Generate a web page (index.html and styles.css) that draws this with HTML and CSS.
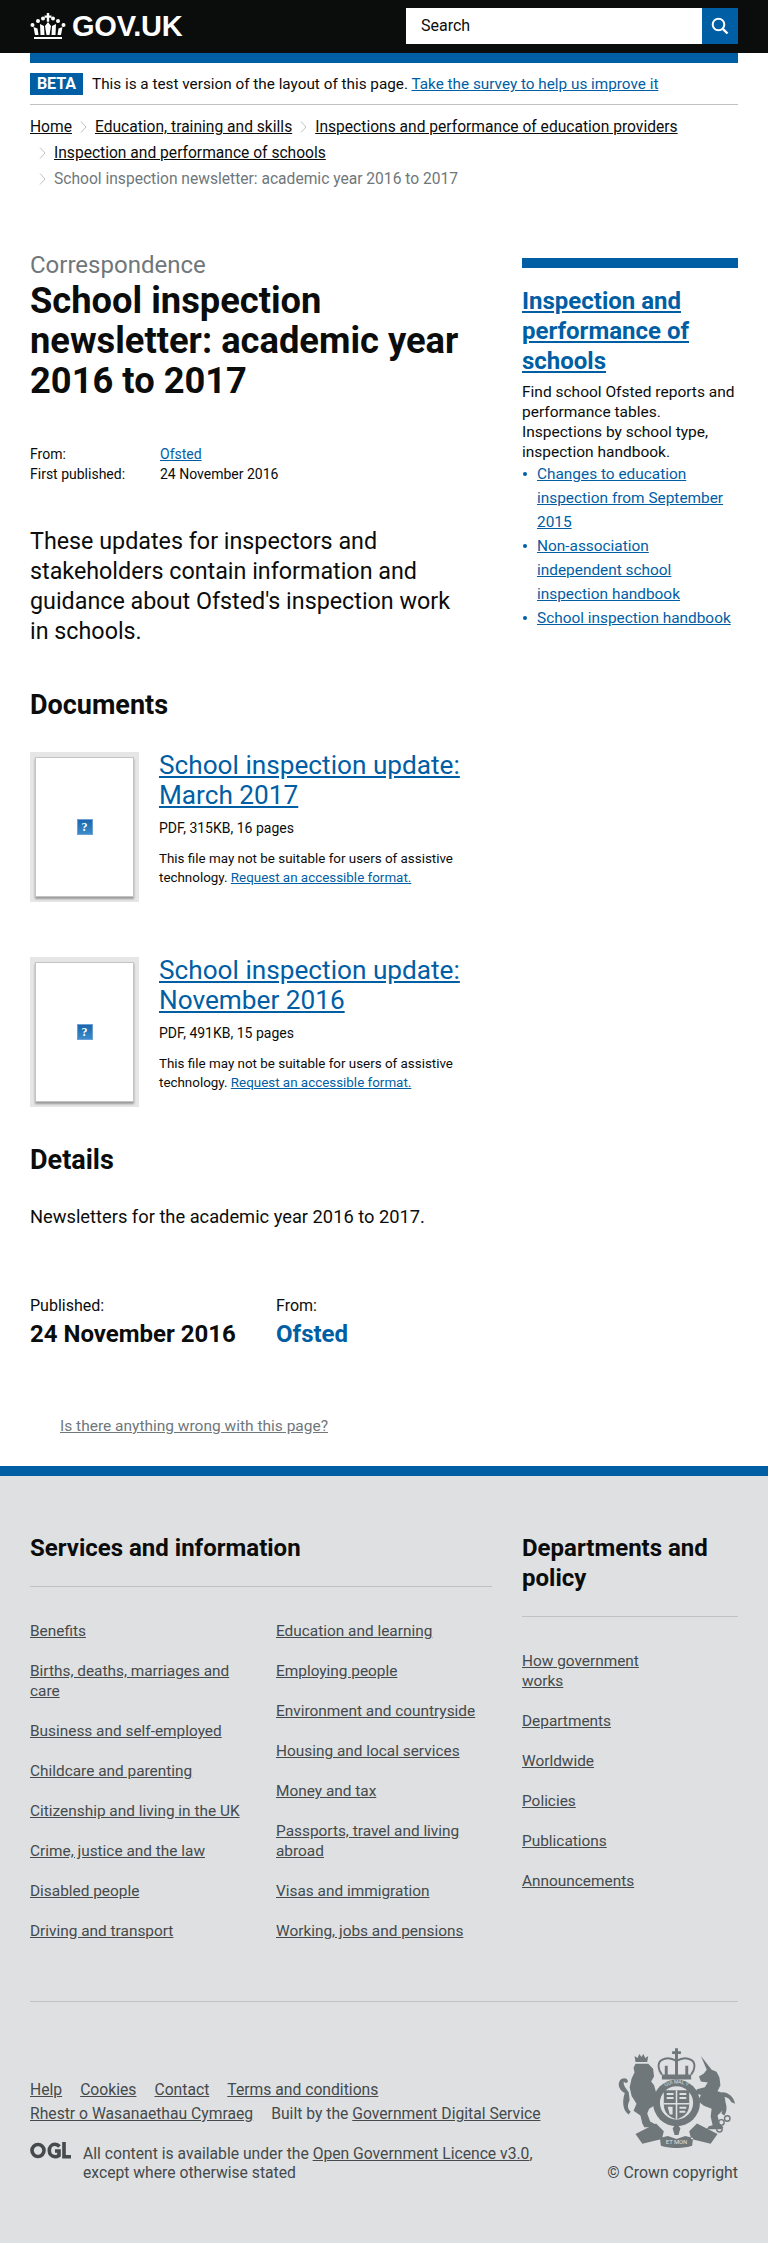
FILE: index.html
```html
<!DOCTYPE html>
<html lang="en">
<head>
<meta charset="utf-8">
<title>School inspection newsletter: academic year 2016 to 2017 - GOV.UK</title>
<link rel="stylesheet" href="styles.css">
</head>
<body>
<header class="site-header">
  <a class="logo" href="#">
    <svg class="crown" width="36" height="26" viewBox="0 0 36 26" aria-hidden="true"><g fill="#fff"><circle cx="2.500" cy="12" r="2"/><circle cx="8" cy="8" r="2"/><circle cx="13" cy="5.500" r="2"/><circle cx="23" cy="5.500" r="2"/><circle cx="28" cy="8" r="2"/><circle cx="33.500" cy="12" r="2"/><path d="M16.800 0h2.400v2.500h2.300v2.300h-2.300v4h-2.400v-4h-2.300v-2.300h2.300z"/><path d="M4 24h28v2H4zM3.500 14l4 1.500 1 6.500H5zM32.500 14l-4 1.500-1 6.500H31zM10 11l4 2 .5 9H10.500zM26 11l-4 2-.5 9h4zM18 9l3 4-1.500 9h-3L15 13z"/></g></svg>
    <span class="logo-text">GOV.UK</span>
  </a>
  <form class="search">
    <span class="search-input">Search</span>
    <button class="search-btn" type="button" aria-label="Search">
      <svg width="20" height="20" viewBox="0 0 20 20"><circle cx="8.500" cy="8.500" r="5.800" fill="none" stroke="#fff" stroke-width="2"/><path d="M12.800 12.800l4.700 4.700" stroke="#fff" stroke-width="2.400"/></svg>
    </button>
  </form>
</header>

<div class="wrap">
  <div class="blue-bar"></div>
  <div class="beta">
    <strong class="beta-tag">BETA</strong>
    <span>This is a test version of the layout of this page. <a class="lnk" href="#">Take the survey to help us improve it</a></span>
  </div>
  <nav class="crumbs">
    <div class="crumb-line"><a href="#">Home</a><svg class="chev" width="7" height="12" viewBox="0 0 7 12" aria-hidden="true"><path d="M1 .5L6 6 1 11.500"/></svg><a href="#">Education, training and skills</a><svg class="chev" width="7" height="12" viewBox="0 0 7 12" aria-hidden="true"><path d="M1 .5L6 6 1 11.500"/></svg><a href="#">Inspections and performance of education providers</a></div>
    <div class="crumb-line"><svg class="chev first" width="7" height="12" viewBox="0 0 7 12" aria-hidden="true"><path d="M1 .5L6 6 1 11.500"/></svg><a href="#">Inspection and performance of schools</a></div>
    <div class="crumb-line current"><svg class="chev first" width="7" height="12" viewBox="0 0 7 12" aria-hidden="true"><path d="M1 .5L6 6 1 11.500"/></svg><span>School inspection newsletter: academic year 2016 to 2017</span></div>
  </nav>

  <div class="columns">
    <main class="main-col">
      <p class="kicker">Correspondence</p>
      <h1 class="title">School inspection newsletter: academic year 2016 to 2017</h1>
      <dl class="meta">
        <dt>From:</dt><dd><a class="lnk" href="#">Ofsted</a></dd>
        <dt>First published:</dt><dd>24 November 2016</dd>
      </dl>
      <p class="lead">These updates for inspectors and stakeholders contain information and guidance about Ofsted's inspection work in schools.</p>

      <h2 class="section-h docs-h">Documents</h2>
      <article class="doc">
        <div class="thumb"><div class="page"><span class="qmark">?</span></div></div>
        <div class="doc-body">
          <h3 class="doc-title"><a class="lnk" href="#">School inspection update: March 2017</a></h3>
          <p class="doc-meta">PDF, 315KB, 16 pages</p>
          <p class="doc-note">This file may not be suitable for users of assistive technology. <a class="lnk" href="#">Request an accessible format.</a></p>
        </div>
      </article>
      <article class="doc">
        <div class="thumb"><div class="page"><span class="qmark">?</span></div></div>
        <div class="doc-body">
          <h3 class="doc-title"><a class="lnk" href="#">School inspection update: November 2016</a></h3>
          <p class="doc-meta">PDF, 491KB, 15 pages</p>
          <p class="doc-note">This file may not be suitable for users of assistive technology. <a class="lnk" href="#">Request an accessible format.</a></p>
        </div>
      </article>

      <h2 class="section-h details-h">Details</h2>
      <p class="details-text">Newsletters for the academic year 2016 to 2017.</p>
    </main>
    <aside class="side">
      <h2 class="side-title"><a href="#">Inspection and performance of schools</a></h2>
      <p class="side-text">Find school Ofsted reports and performance tables. Inspections by school type, inspection handbook.</p>
      <ul class="side-list">
        <li><a class="lnk" href="#">Changes to education inspection from September 2015</a></li>
        <li><a class="lnk" href="#">Non-association independent school inspection handbook</a></li>
        <li><a class="lnk" href="#">School inspection handbook</a></li>
      </ul>
    </aside>
  </div>

  <div class="pub">
    <div class="pub-item"><div class="pub-label">Published:</div><div class="pub-value">24 November 2016</div></div>
    <div class="pub-item"><div class="pub-label">From:</div><div class="pub-value"><a href="#">Ofsted</a></div></div>
  </div>
  <a class="wrong" href="#">Is there anything wrong with this page?</a>
</div>

<footer class="footer">
  <div class="foot-nav">
    <section class="foot-services">
      <h2 class="foot-h">Services and information</h2>
      <div class="foot-cols">
        <ul class="foot-list">
          <li><a href="#">Benefits</a></li>
          <li><a href="#">Births, deaths, marriages and care</a></li>
          <li><a href="#">Business and self-employed</a></li>
          <li><a href="#">Childcare and parenting</a></li>
          <li><a href="#">Citizenship and living in the UK</a></li>
          <li><a href="#">Crime, justice and the law</a></li>
          <li><a href="#">Disabled people</a></li>
          <li><a href="#">Driving and transport</a></li>
        </ul>
        <ul class="foot-list">
          <li><a href="#">Education and learning</a></li>
          <li><a href="#">Employing people</a></li>
          <li><a href="#">Environment and countryside</a></li>
          <li><a href="#">Housing and local services</a></li>
          <li><a href="#">Money and tax</a></li>
          <li><a href="#">Passports, travel and living abroad</a></li>
          <li><a href="#">Visas and immigration</a></li>
          <li><a href="#">Working, jobs and pensions</a></li>
        </ul>
      </div>
    </section>
    <section class="foot-depts">
      <h2 class="foot-h">Departments and policy</h2>
      <ul class="foot-list dept-list">
        <li><a href="#">How government works</a></li>
        <li><a href="#">Departments</a></li>
        <li><a href="#">Worldwide</a></li>
        <li><a href="#">Policies</a></li>
        <li><a href="#">Publications</a></li>
        <li><a href="#">Announcements</a></li>
      </ul>
    </section>
  </div>
  <div class="foot-meta">
    <div class="foot-left">
      <div class="foot-links"><a href="#">Help</a><a href="#">Cookies</a><a href="#">Contact</a><a href="#">Terms and conditions</a></div>
      <div class="foot-links"><a href="#">Rhestr o Wasanaethau Cymraeg</a><span>Built by the <a class="inline" href="#">Government Digital Service</a></span></div>
      <div class="licence">
        <svg class="ogl" width="41" height="17" viewBox="0 0 41 17" aria-hidden="true"><g fill="none" stroke="#454a4c" stroke-width="3.600"><circle cx="8" cy="8.500" r="6"/><path d="M29.500 4.500C28 2.800 26.500 2.300 25 2.300c-3.400 0-5.700 2.700-5.700 6.200s2.300 6.200 5.700 6.200c1.600 0 3-.5 4-1.200V9h-4"/><path d="M34 0v14.800h7"/></g></svg>
        <p class="licence-text">All content is available under the <a class="inline" href="#">Open Government Licence v3.0</a>, except where otherwise stated</p>
      </div>
    </div>
    <div class="foot-right">
      <svg class="crest" width="122" height="100" viewBox="0 0 125 102" aria-hidden="true">
        <defs><path id="garter" d="M40 58a22 22 0 1 1 44 0"/></defs>
        <g fill="#6f777b">
          <path d="M20 14l-1-6 3 2 2-4 2 3 2-3 2 4 3-2-1 6z"/>
          <path d="M20 16h13l5 5 1 8-3 5 3 4 2 7 1 8-3 6-5 3-2 5 3 8 5 3v3H29l-2-4-2-8-7-5 3-7-5-8-2-9 2-9 3-6-1-5z"/>
          <path d="M9 46c-5-3-8-8-5-13 2-3 7-3 8 0s-3 3-4 1c-1 4 3 8 5 11l1 8c-2 5-3 8 1 12l-2 3c-6-4-7-13-4-22z"/>
          <path d="M87 8l11 14 5 2 3 6 1 8-3 6 6 2 2 7-1 9-7 7 2 8 4 4-2 2H93l2-3 4-1-2-9 1-8-8-3-6-5 3-6-6-2 2-4 8-2 3-5-7-1-2-5 5-3 3-4z"/>
          <path d="M109 45c6 0 12 5 13 12l-4-2c-2-4-5-5-8-5 3 6 5 13 1 19l-3-2c3-6 1-13-2-18z"/>
          <g fill="none" stroke="#6f777b" stroke-width="1.400"><circle cx="108" cy="76" r="2.800"/><circle cx="114" cy="72" r="2.800"/><circle cx="106" cy="83" r="2.800"/></g>
          <path d="M60.500 0h3v3h3v3h-3v3h-3V6h-3V3h3z"/>
          <path d="M47 27c-4-5-5-12 0-15 5-3 10-2 15 1 5-3 10-4 15-1 5 3 4 10 0 15" fill="none" stroke="#6f777b" stroke-width="2"/>
          <path d="M60.500 8h3v19h-3zM47 27h30v5H47zM50 18h3v9h-3zM71 18h3v9h-3z"/>
          <circle cx="62" cy="56" r="24"/>
          <circle cx="62" cy="56" r="17" fill="#dee0e2"/>
          <path d="M49 43h26v15c0 9-7 13-13 15-6-2-13-6-13-15z"/>
          <path d="M61.200 43h1.600v30h-1.600zM49 56h26v1.600H49z" fill="#dee0e2"/>
          <g fill="#dee0e2"><path d="M52 46h7v2h-7zM52 50h7v2h-7zM65 46h7v2h-7zM65 50h7v2h-7zM65 60h7v2h-7zM65 64h6v2h-6zM53 60l5 0v8h-3z"/></g>
          <path d="M20 88l21-11 8 8-2 8-20 5zM104 88L83 77l-8 8 2 8 20 5zM45 92l8-2 9 3 9-3 8 2-1 8c-10 3-22 3-32 0z"/>
          <path d="M62 77l4 5-2 7h-4l-2-7z"/>
        </g>
        <text class="crest-garter"><textPath href="#garter" startOffset="50%" text-anchor="middle">QUI MAL Y</textPath></text>
        <text class="crest-motto" x="62" y="98" text-anchor="middle">ET MON</text>
      </svg>
      <p class="copyright">© Crown copyright</p>
    </div>
  </div>
</footer>
</body>
</html>
```
FILE: styles.css
```css
* { box-sizing: border-box; }
html, body { margin: 0; padding: 0; }
body { font-family: Roboto, "Noto Sans", sans-serif; color: #0b0c0c; background: #fff; height: 2243px; overflow: hidden; }
a { color: inherit; }
p, h1, h2, h3, ul, dl, dd { margin: 0; padding: 0; }
ul { list-style: none; }
.lnk { color: #005ea5; }

.site-header { height: 53px; background: #0b0c0c; padding: 8px 30px 0; display: flex; justify-content: space-between; align-items: flex-start; }
.logo { display: flex; align-items: center; gap: 6px; text-decoration: none; color: #fff; height: 36px; }
.logo-text { font: 700 29px/36px "Liberation Sans", sans-serif; letter-spacing: -0.2px; }
.search { display: flex; width: 332px; height: 36px; }
.search-input { flex: 1; background: #fff; font-size: 16px; line-height: 36px; padding-left: 15px; }
.search-btn { width: 36px; border: 0; padding: 0; background: #005ea5; display: flex; align-items: center; justify-content: center; }

.wrap { padding: 0 30px; height: 1413px; }
.blue-bar { height: 10px; background: #005ea5; }
.beta { height: 42px; padding-top: 10px; display: flex; gap: 9px; align-items: flex-start; font-size: 15.300px; line-height: 22px; border-bottom: 1px solid #bfc1c3; }
.beta-tag { background: #005ea5; color: #fff; width: 53px; height: 22px; text-align: center; font-size: 16px; line-height: 22px; }
.crumbs { padding-top: 9px; font-size: 15.600px; line-height: 26px; }
.crumb-line { display: flex; align-items: center; height: 26px; }
.chev { fill: none; stroke: #bfc1c3; stroke-width: 1; margin: 0 8px; flex: none; }
.chev.first { margin: 0 8px 0 9px; }
.current { color: #6f777b; }

.columns { display: grid; grid-template-columns: 438px 216px; column-gap: 54px; padding-top: 58px; }
.kicker { font-size: 24px; line-height: 30px; color: #6f777b; }
.title { font-size: 36.300px; line-height: 40px; font-weight: 700; margin-top: 1px; }
.meta { display: grid; grid-template-columns: 130px 1fr; font-size: 14px; line-height: 20px; margin-top: 43px; }
.lead { font-size: 23.300px; line-height: 30px; margin-top: 42px; }
.section-h { font-size: 27px; line-height: 30px; font-weight: 700; }
.docs-h { margin-top: 44px; }
.doc { display: flex; gap: 20px; margin-top: 32px; }
.doc + .doc { margin-top: 55px; }
.thumb { width: 109px; height: 150px; background: #e6e6e6; padding: 5px; flex: none; }
.page { height: 140px; background: #fff; border: 1px solid #c4c4c4; box-shadow: 0 2px 2px #999; display: flex; align-items: center; justify-content: center; }
.qmark { width: 16px; height: 16px; border: 1px solid #6d9fd4; background: linear-gradient(#1a66ad, #3a8ccb); color: #fff; font: 700 12px/14px "Liberation Serif", serif; text-align: center; }
.doc-body { flex: 1; margin-top: -2px; }
.doc-title { font-size: 26.200px; line-height: 30px; font-weight: 400; }
.doc-meta { font-size: 14px; line-height: 20px; margin-top: 8px; }
.doc-note { font-size: 13.400px; line-height: 19px; margin-top: 11px; }
.details-h { margin-top: 38px; }
.details-text { font-size: 18.300px; line-height: 28px; margin-top: 28px; }

.side { border-top: 10px solid #005ea5; padding-top: 18px; margin-top: 8px; }
.side-title { font-size: 24px; line-height: 30px; font-weight: 700; color: #005ea5; }
.side-text { font-size: 15.500px; line-height: 20px; margin-top: 6px; }
.side-list { font-size: 15.400px; line-height: 24px; }
.side-list li { padding: 0 5px 0 15px; position: relative; }
.side-list li::before { content: ""; position: absolute; left: 1px; top: 10px; width: 4px; height: 4px; border-radius: 50%; background: #005ea5; }

.pub { display: flex; margin-top: 65px; }
.pub-item { width: 246px; }
.pub-label { font-size: 16px; line-height: 20px; }
.pub-value { font-size: 24px; line-height: 30px; font-weight: 700; margin-top: 3px; }
.pub-value a { color: #005ea5; text-decoration: none; }
.wrong { display: block; margin: 67px 0 0 30px; color: #6f777b; font-size: 15.500px; line-height: 20px; }

.footer { border-top: 10px solid #005ea5; background: #dee0e2; height: 777px; padding: 57px 30px 0; color: #454a4c; }
.foot-nav { display: grid; grid-template-columns: 462px 216px; column-gap: 30px; height: 469px; border-bottom: 1px solid #bfc1c3; }
.foot-h { font-size: 24px; line-height: 30px; font-weight: 700; color: #0b0c0c; padding-bottom: 23px; border-bottom: 1px solid #bfc1c3; }
.foot-cols { display: grid; grid-template-columns: 246px 216px; }
.foot-list { padding-top: 34px; font-size: 15.400px; line-height: 20px; }
.foot-list li { margin-bottom: 20px; max-width: 225px; }
.dept-list li:first-child { width: 130px; }
.foot-meta { display: flex; justify-content: space-between; padding-top: 40px; }
.foot-left { padding-top: 36px; }
.foot-links { display: flex; gap: 18px; font-size: 15.700px; line-height: 24px; }
.foot-links a:not(.inline) { white-space: nowrap; }
.licence { display: flex; gap: 12px; margin-top: 10px; }
.ogl { flex: none; margin-top: 6px; }
.licence-text { font-size: 15.700px; line-height: 19px; width: 490px; margin-top: 8px; }
.foot-right { display: flex; flex-direction: column; align-items: flex-end; }
.crest { display: block; margin-top: 6px; }
.crest-motto { font-size: 6px; fill: #dee0e2; }
.crest-garter { font-size: 5px; fill: #dee0e2; }
.copyright { font-size: 15.800px; line-height: 20px; margin-top: 15px; }
```
